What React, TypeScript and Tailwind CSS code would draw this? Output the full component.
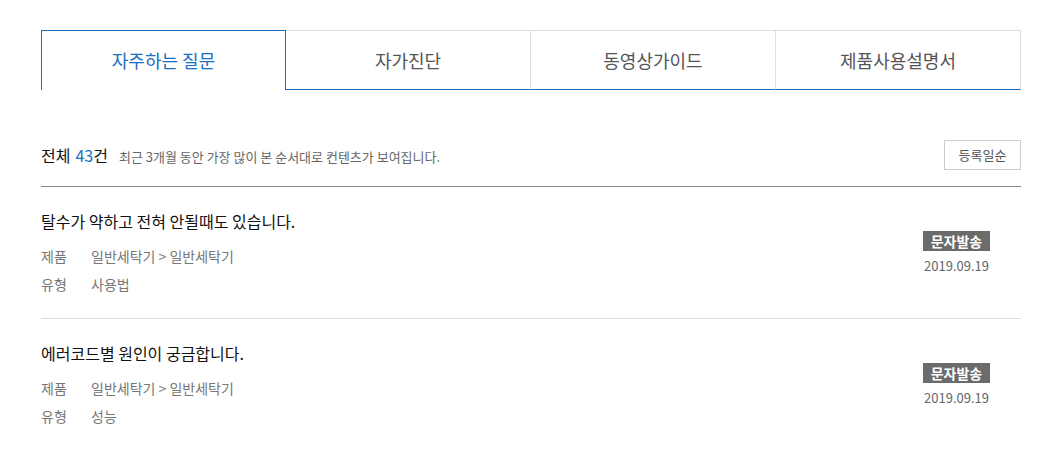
import React from "react";

const tabs = ["자주하는 질문", "자가진단", "동영상가이드", "제품사용설명서"];

const items = [
  { title: "탈수가 약하고 전혀 안될때도 있습니다.", product: "일반세탁기 > 일반세탁기", type: "사용법", date: "2019.09.19" },
  { title: "에러코드별 원인이 궁금합니다.", product: "일반세탁기 > 일반세탁기", type: "성능", date: "2019.09.19" },
];

export default function App() {
  return (
    <div
      className="w-[1040px] h-[449px] bg-white overflow-hidden"
      style={{ fontFamily: '"Noto Sans CJK KR", "Noto Sans", sans-serif' }}
    >
      <div className="ml-[41px] w-[980px] pt-[30px]">
        <div className="grid grid-cols-4 h-[60px]">
          {tabs.map((t, i) =>
            i === 0 ? (
              <div
                key={t}
                className="flex items-center justify-center border-t border-l border-r border-[#1b6ec2] text-[18px] text-[#1b6ec2]"
              >
                {t}
              </div>
            ) : (
              <div
                key={t}
                className="flex items-center justify-center border-t border-r border-t-[#dddddd] border-r-[#dddddd] border-b border-b-[#1b6ec2] text-[18px] text-[#555555]"
              >
                {t}
              </div>
            )
          )}
        </div>

        <div className="mt-[50px] flex items-center justify-between h-[30px]">
          <div className="flex items-baseline">
            <span className="text-[16px] text-[#111]">전체</span>
            <span className="text-[16px] text-[#1b6ec2] ml-[5px]">43</span>
            <span className="text-[16px] text-[#111]">건</span>
            <span className="ml-[11px] text-[13px] text-[#666]">최근 3개월 동안 가장 많이 본 순서대로 컨텐츠가 보여집니다.</span>
          </div>
          <div className="w-[77px] h-[30px] border border-[#cccccc] flex items-center justify-center text-[13px] text-[#555]">
            등록일순
          </div>
        </div>
        <div className="mt-[16px] h-px bg-[#888888]" />

        {items.map((it, idx) => (
          <div key={idx} className={idx === 0 ? "flex justify-between" : "flex justify-between border-t border-[#dddddd]"}>
            <div className="pt-[23px] pb-[20px]">
              <div className="text-[16px] leading-[22px] text-[#111]">{it.title}</div>
              <div className="mt-[10px] flex text-[14px] leading-[28px] text-[#777]">
                <span className="w-[50px]">제품</span>
                <span>{it.product}</span>
              </div>
              <div className="flex text-[14px] leading-[28px] text-[#777]">
                <span className="w-[50px]">유형</span>
                <span>{it.type}</span>
              </div>
            </div>
            <div className="pt-[44px] mr-[31px] flex flex-col items-center">
              <div className="w-[67px] h-[20px] bg-[#6b6b6b] text-white text-[14px] font-bold flex items-center justify-center">
                문자발송
              </div>
              <div className="mt-[7px] text-[13px] leading-[16px] text-[#666]">{it.date}</div>
            </div>
          </div>
        ))}
      </div>
    </div>
  );
}
